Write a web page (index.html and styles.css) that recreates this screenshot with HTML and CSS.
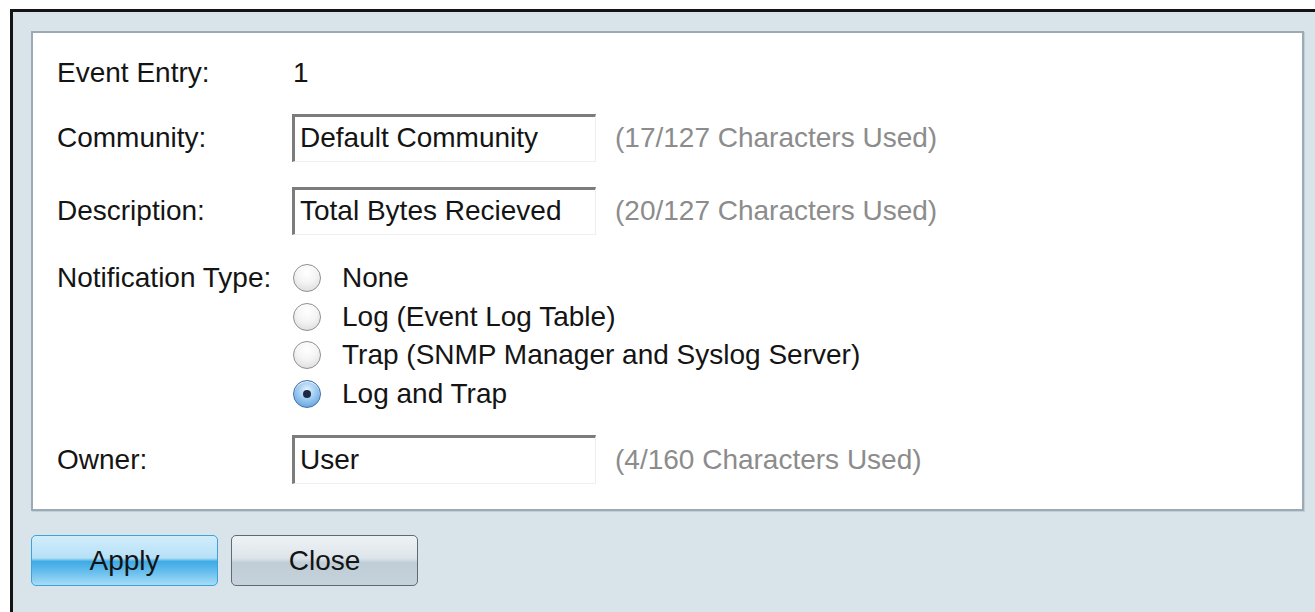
FILE: index.html
```html
<!DOCTYPE html>
<html lang="en">
<head>
<meta charset="utf-8">
<title>Edit Event</title>
<link rel="stylesheet" href="styles.css">
</head>
<body>
<div class="window">
  <form class="dialog">
    <div class="panel">
      <div class="row row-entry">
        <span class="label">Event Entry:</span>
        <span class="value">1</span>
      </div>
      <div class="row row-community">
        <label class="label" for="community">Community:</label>
        <input class="field" id="community" type="text" value="Default Community">
        <span class="hint">(17/127 Characters Used)</span>
      </div>
      <div class="row row-description">
        <label class="label" for="description">Description:</label>
        <input class="field" id="description" type="text" value="Total Bytes Recieved">
        <span class="hint">(20/127 Characters Used)</span>
      </div>
      <div class="row row-notify">
        <span class="label">Notification Type:</span>
        <div class="options">
          <label class="option"><input class="radio" type="radio" name="ntype"><span>None</span></label>
          <label class="option"><input class="radio" type="radio" name="ntype"><span>Log (Event Log Table)</span></label>
          <label class="option"><input class="radio" type="radio" name="ntype"><span>Trap (SNMP Manager and Syslog Server)</span></label>
          <label class="option"><input class="radio" type="radio" name="ntype" checked><span>Log and Trap</span></label>
        </div>
      </div>
      <div class="row row-owner">
        <label class="label" for="owner">Owner:</label>
        <input class="field" id="owner" type="text" value="User">
        <span class="hint">(4/160 Characters Used)</span>
      </div>
    </div>
    <div class="actions">
      <button type="button" class="btn btn-primary">Apply</button>
      <button type="button" class="btn btn-secondary">Close</button>
    </div>
  </form>
</div>
</body>
</html>
```

FILE: styles.css
```css
html, body {
  margin: 0;
  padding: 0;
  background: #ffffff;
  height: 100%;
  overflow: hidden;
}

body {
  font-family: "Liberation Sans", Arial, Helvetica, sans-serif;
  font-size: 28px;
  color: #141414;
}

/* outer frame: dark rule on the top and left edges */
.window {
  box-sizing: border-box;
  margin: 9px 0 0 10px;
  height: calc(100% - 9px);
  border-top: 3px solid #141414;
  border-left: 3px solid #141414;
  background: #d9e3ea;
  padding: 19px 11px 0 18px;
}

.dialog {
  margin: 0;
}

.panel {
  background: #ffffff;
  border: 2px solid #9aabb6;
  box-shadow: 1px 1px 0 #c3ced6;
  padding: 16px 24px 25px 24px;
}

.row {
  display: flex;
  align-items: center;
  height: 48px;
}

.label {
  width: 235px;
  flex: none;
  white-space: nowrap;
}

.value {
  padding-left: 1px;
}

.row-community { margin-top: 17px; }
.row-description { margin-top: 25px; }
.row-notify {
  margin-top: 24px;
  height: auto;
  align-items: flex-start;
}
.row-notify .label {
  line-height: 38px;
}
.row-owner {
  margin-top: 22px;
  height: 49px;
}

.field {
  box-sizing: border-box;
  width: 304px;
  height: 100%;
  margin: 0;
  padding: 0 0 2px 5px;
  font-family: inherit;
  font-size: 28px;
  color: #141414;
  background: #ffffff;
  border-top: 3px solid #7c7c7c;
  border-left: 3px solid #7c7c7c;
  border-right: 1px solid #efefef;
  border-bottom: 1px solid #efefef;
  outline: none;
}

.hint {
  margin-left: 19px;
  color: #8c8c8c;
  white-space: nowrap;
}

.options {
  display: flex;
  flex-direction: column;
}

.option {
  display: flex;
  align-items: center;
  height: 38.5px;
  white-space: nowrap;
}

.radio {
  appearance: none;
  -webkit-appearance: none;
  box-sizing: border-box;
  width: 28px;
  height: 28px;
  margin: 0 21px 0 1px;
  border-radius: 50%;
  border: 1.5px solid #8f8f8f;
  background: radial-gradient(circle at 50% 30%, #ffffff 0%, #f4f4f4 45%, #d6d6d6 100%);
  box-shadow: inset 0 1px 1px rgba(255,255,255,0.9);
  position: relative;
  flex: none;
}

.radio:checked {
  border-color: #3d6fa8;
  background: radial-gradient(circle at 50% 35%, #e6f3ff 0%, #9cc9f0 45%, #4f95d8 100%);
}

/* centre dot of the selected option */
.radio:checked::after {
  content: "";
  position: absolute;
  left: 50%;
  top: 50%;
  width: 8px;
  height: 8px;
  margin: -4px 0 0 -4px;
  border-radius: 50%;
  background: #1a2a44;
}

.actions {
  display: flex;
  gap: 13px;
  margin-top: 24px;
}

.btn {
  box-sizing: border-box;
  width: 187px;
  height: 51px;
  border-radius: 5px;
  font-family: inherit;
  font-size: 28px;
  color: #141414;
  padding: 0;
  cursor: pointer;
}

.btn-primary {
  border: 1.5px solid #3ba2dc;
  background: linear-gradient(to bottom, #d2edfb 0%, #b6e0f7 45%, #3eaae6 52%, #6bc0ee 75%, #a8dcf7 100%);
}

.btn-secondary {
  border: 1.5px solid #5f6a72;
  background: linear-gradient(to bottom, #eef2f5 0%, #dde5ea 45%, #bfcdd7 55%, #c5d2db 100%);
}
```
